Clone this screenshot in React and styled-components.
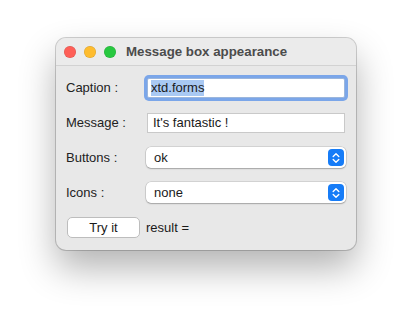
import React from "react";
import styled, { createGlobalStyle } from "styled-components";

const Global = createGlobalStyle`
  html, body { margin: 0; padding: 0; background: #ffffff; }
  body { font-family: "Liberation Sans", Arial, sans-serif; }
`;

const Page = styled.div`
  width: 412px;
  height: 325px;
  box-sizing: border-box;
  padding: 38px 0 0 56px;
  overflow: hidden;
`;

const Window = styled.div`
  width: 300px;
  height: 212px;
  box-sizing: border-box;
  border-radius: 10px;
  background: #e8e8e8;
  box-shadow: 0 0 0 1px rgba(0, 0, 0, 0.18), 0 18px 36px rgba(0, 0, 0, 0.3);
  overflow: hidden;
  display: flex;
  flex-direction: column;
`;

const TitleBar = styled.div`
  height: 28px;
  flex: none;
  display: flex;
  align-items: center;
  padding-left: 8px;
  background: #ebebeb;
  border-bottom: 1px solid #d2d2d2;
  box-sizing: border-box;
`;

const Light = styled.span`
  width: 12px;
  height: 12px;
  border-radius: 50%;
  background: ${(p) => p.$color};
  box-shadow: inset 0 0 0 0.5px rgba(0, 0, 0, 0.15);
  margin-right: 8px;
`;

const Title = styled.div`
  margin-left: 2px;
  font-size: 13.3px;
  font-weight: bold;
  color: #4c4c4c;
`;

const Body = styled.div`
  display: grid;
  grid-template-columns: 80px 200px;
  grid-auto-rows: 35px;
  padding: 4px 10px 0 10px;
  align-items: center;
`;

const Label = styled.div`
  font-size: 13px;
  color: #222;
`;

const TextField = styled.div`
  height: 20px;
  box-sizing: border-box;
  margin-left: 1px;
  margin-right: 1px;
  background: #fff;
  border: 1px solid ${(p) => (p.$focused ? "#9bb6dc" : "#c9c9c9")};
  box-shadow: ${(p) => (p.$focused ? "0 0 0 3px #7ba6e9" : "none")};
  border-radius: ${(p) => (p.$focused ? "2px" : "0")};
  font-size: 13px;
  color: #1a1a1a;
  display: flex;
  align-items: center;
  padding-left: ${(p) => (p.$focused ? "3px" : "5px")};
`;

const Selection = styled.span`
  background: #a9c9f3;
  line-height: 16px;
`;

const Select = styled.div`
  height: 21px;
  box-sizing: border-box;
  background: #fff;
  border-radius: 5px;
  box-shadow: 0 0 0 0.5px rgba(0, 0, 0, 0.18), 0 1px 1.5px rgba(0, 0, 0, 0.22);
  display: flex;
  align-items: center;
  justify-content: space-between;
  padding: 0 2px 0 8px;
  font-size: 13px;
  color: #1a1a1a;
`;

const Stepper = styled.span`
  width: 16px;
  height: 17px;
  border-radius: 4px;
  background: #167cf7;
  display: flex;
  align-items: center;
  justify-content: center;
`;

const Button = styled.div`
  width: 73px;
  height: 21px;
  box-sizing: border-box;
  background: #fff;
  border: 1px solid #bdbdbd;
  border-radius: 5px;
  font-size: 13px;
  color: #1a1a1a;
  display: flex;
  align-items: center;
  justify-content: center;
  margin-left: 1px;
`;

const Result = styled.div`
  font-size: 13px;
  color: #1a1a1a;
`;

const Chevrons = () => (
  <svg width="8" height="12" viewBox="0 0 8 12">
    <path d="M1.2 4.5 L4 1.8 L6.8 4.5" fill="none" stroke="#fff" strokeWidth="1.4" strokeLinecap="round" strokeLinejoin="round" />
    <path d="M1.2 7.5 L4 10.2 L6.8 7.5" fill="none" stroke="#fff" strokeWidth="1.4" strokeLinecap="round" strokeLinejoin="round" />
  </svg>
);

export default function App() {
  return (
    <>
      <Global />
      <Page>
        <Window>
          <TitleBar>
            <Light $color="#fe5f57" />
            <Light $color="#febc2e" />
            <Light $color="#28c840" />
            <Title>Message box appearance</Title>
          </TitleBar>
          <Body>
            <Label>Caption :</Label>
            <TextField $focused>
              <Selection>xtd.forms</Selection>
            </TextField>
            <Label>Message :</Label>
            <TextField>It's fantastic !</TextField>
            <Label>Buttons :</Label>
            <Select>
              <span>ok</span>
              <Stepper>
                <Chevrons />
              </Stepper>
            </Select>
            <Label>Icons :</Label>
            <Select>
              <span>none</span>
              <Stepper>
                <Chevrons />
              </Stepper>
            </Select>
            <Button>Try it</Button>
            <Result>result =</Result>
          </Body>
        </Window>
      </Page>
    </>
  );
}
